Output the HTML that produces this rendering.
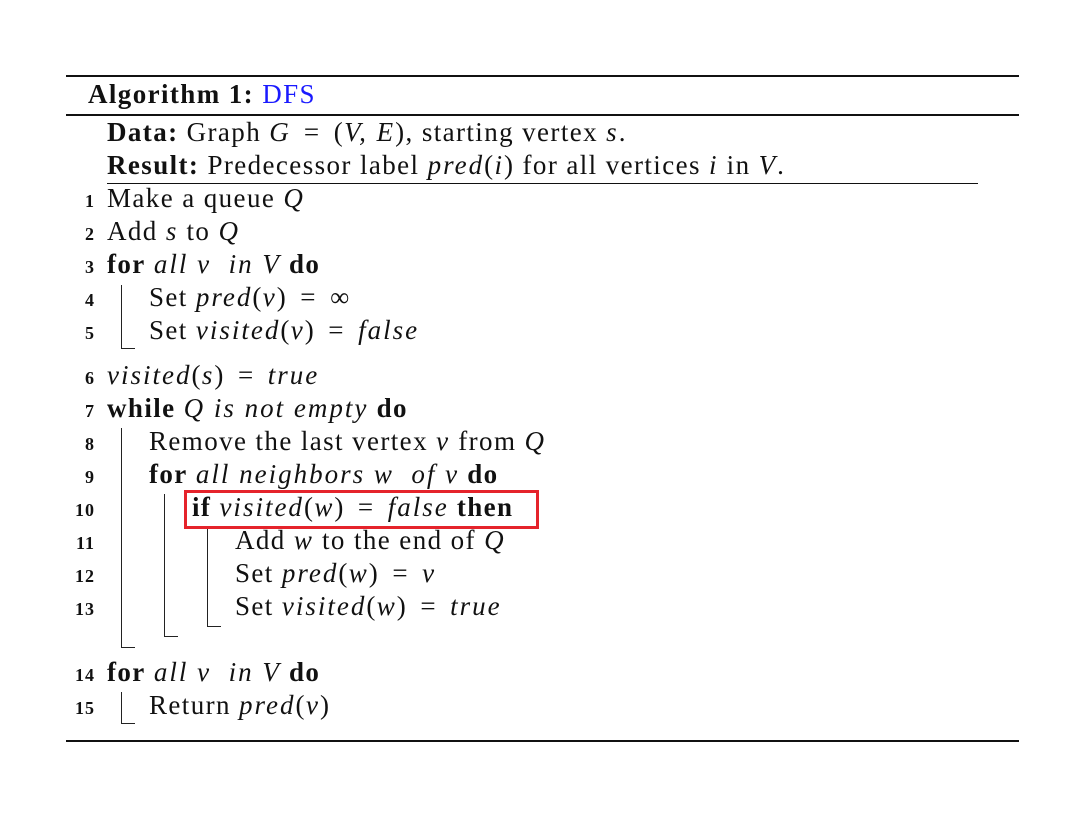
<!DOCTYPE html>
<html><head><meta charset="utf-8"><style>
body{margin:0;background:#fff;width:1076px;height:814px;position:relative;overflow:hidden;font-family:"Liberation Serif",serif;color:#111}
.t{position:absolute;font-size:27px;line-height:27px;white-space:nowrap;letter-spacing:1.4px}
.n{position:absolute;font-size:18px;line-height:18px;font-weight:bold;width:42px;text-align:right;left:53px;letter-spacing:1px}
.r{position:absolute;background:#111}
i{font-style:italic;letter-spacing:2px}
b{font-weight:bold}
.e{margin:0 5px}
.v{position:absolute;width:1px;background:#222}
.h{position:absolute;height:1px;background:#222;width:14px}
</style></head><body>
<div class="r" style="left:66px;top:75px;width:953px;height:2px"></div>
<div class="t" style="left:88px;top:81px"><b>Algorithm 1:</b> <span style="color:#1a1aff">DFS</span></div>
<div class="r" style="left:66px;top:114px;width:953px;height:2px"></div>
<div class="t" style="left:107px;top:119px"><b>Data:</b> Graph <i>G</i> <span class="e">=</span> (<i>V, E</i>), starting vertex <i>s</i>.</div>
<div class="t" style="left:107px;top:152px"><b>Result:</b> Predecessor label <i>pred</i>(<i>i</i>) for all vertices <i>i</i> in <i>V</i>.</div>
<div class="r" style="left:107px;top:183px;width:871px;height:1px"></div>

<div class="n" style="top:192px">1</div><div class="t" style="left:107px;top:185px">Make a queue <i>Q</i></div>
<div class="n" style="top:225px">2</div><div class="t" style="left:107px;top:218px">Add <i>s</i> to <i>Q</i></div>
<div class="n" style="top:258px">3</div><div class="t" style="left:107px;top:251px"><b>for</b> <i>all v &nbsp;in V</i> <b>do</b></div>
<div class="n" style="top:291px">4</div><div class="t" style="left:149px;top:284px">Set <i>pred</i>(<i>v</i>) <span class="e">=</span> ∞</div>
<div class="n" style="top:324px">5</div><div class="t" style="left:149px;top:317px">Set <i>visited</i>(<i>v</i>) <span class="e">=</span> <i>false</i></div>
<div class="v" style="left:121px;top:285px;height:63px"></div><div class="h" style="left:121px;top:348px"></div>
<div class="n" style="top:369px">6</div><div class="t" style="left:107px;top:362px"><i>visited</i>(<i>s</i>) <span class="e">=</span> <i>true</i></div>
<div class="n" style="top:402px">7</div><div class="t" style="left:107px;top:395px"><b>while</b> <i>Q is not empty</i> <b>do</b></div>
<div class="n" style="top:435px">8</div><div class="t" style="left:149px;top:428px">Remove the last vertex <i>v</i> from <i>Q</i></div>
<div class="n" style="top:468px">9</div><div class="t" style="left:149px;top:461px"><b>for</b> <i>all neighbors w &nbsp;of v</i> <b>do</b></div>
<div class="n" style="top:501px">10</div><div class="t" style="left:192px;top:494px"><b>if</b> <i>visited</i>(<i>w</i>) <span class="e">=</span> <i>false</i> <b>then</b></div>
<div class="n" style="top:534px">11</div><div class="t" style="left:235px;top:527px">Add <i>w</i> to the end of <i>Q</i></div>
<div class="n" style="top:567px">12</div><div class="t" style="left:235px;top:560px">Set <i>pred</i>(<i>w</i>) <span class="e">=</span> <i>v</i></div>
<div class="n" style="top:600px">13</div><div class="t" style="left:235px;top:593px">Set <i>visited</i>(<i>w</i>) <span class="e">=</span> <i>true</i></div>
<div class="v" style="left:121px;top:428px;height:219px"></div><div class="h" style="left:121px;top:647px"></div>
<div class="v" style="left:164px;top:494px;height:142px"></div><div class="h" style="left:164px;top:636px"></div>
<div class="v" style="left:207px;top:528px;height:98px"></div><div class="h" style="left:207px;top:626px"></div>
<div style="position:absolute;left:184px;top:490px;width:349px;height:33px;border:3px solid #e5232b"></div>
<div class="n" style="top:666px">14</div><div class="t" style="left:107px;top:659px"><b>for</b> <i>all v &nbsp;in V</i> <b>do</b></div>
<div class="n" style="top:699px">15</div><div class="t" style="left:149px;top:692px">Return <i>pred</i>(<i>v</i>)</div>
<div class="v" style="left:121px;top:692px;height:31px"></div><div class="h" style="left:121px;top:723px"></div>
<div class="r" style="left:66px;top:740px;width:953px;height:2px"></div>
</body></html>
